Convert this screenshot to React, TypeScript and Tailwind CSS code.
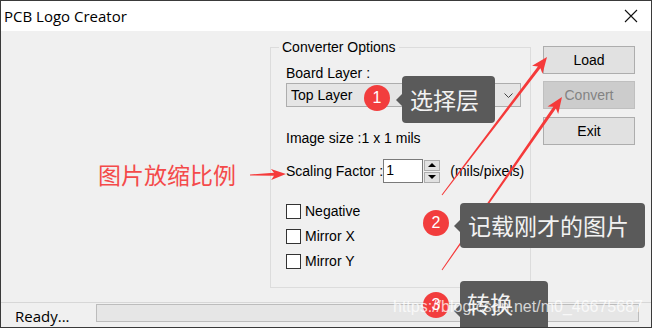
import type { ReactNode } from "react";

const ui = "font-['Liberation_Sans',Arial,sans-serif]";
const cjk = "font-['Noto_Sans_CJK_SC','Noto_Sans',sans-serif]";

function arrowPoints(
  x1: number,
  y1: number,
  x2: number,
  y2: number,
  head = 16,
  headW = 13,
  tail = 1,
  shaft = 3.2
) {
  const len = Math.hypot(x2 - x1, y2 - y1);
  const ux = (x2 - x1) / len;
  const uy = (y2 - y1) / len;
  const nx = -uy;
  const ny = ux;
  const bx = x2 - ux * head;
  const by = y2 - uy * head;
  const jx = bx + ux * 3;
  const jy = by + uy * 3;
  const pts = [
    [x1 + (nx * tail) / 2, y1 + (ny * tail) / 2],
    [jx + (nx * shaft) / 2, jy + (ny * shaft) / 2],
    [bx + (nx * headW) / 2, by + (ny * headW) / 2],
    [x2, y2],
    [bx - (nx * headW) / 2, by - (ny * headW) / 2],
    [jx - (nx * shaft) / 2, jy - (ny * shaft) / 2],
    [x1 - (nx * tail) / 2, y1 - (ny * tail) / 2],
  ];
  return pts.map((p) => p.map((v) => v.toFixed(1)).join(",")).join(" ");
}

function Callout({ className, children }: { className: string; children: ReactNode }) {
  return (
    <div className={`absolute rounded-[4px] bg-[#5a5a5a] text-[#f2f2f2] ${cjk} ${className}`}>
      <span className="absolute left-[-6px] top-1/2 -mt-[6px] h-0 w-0 border-y-[6px] border-r-[6px] border-y-transparent border-r-[#5a5a5a]" />
      {children}
    </div>
  );
}

function Badge({ n, className }: { n: number; className: string }) {
  return (
    <div
      className={`absolute flex h-[26px] w-[26px] items-center justify-center rounded-full bg-[#f23d3d] text-[16px] text-white ${ui} ${className}`}
    >
      {n}
    </div>
  );
}

function Check({ label }: { label: string }) {
  return (
    <div className="flex h-[16px] items-center">
      <span className="h-[15px] w-[15px] border border-[#333] bg-white" />
      <span className="ml-[4px] text-[14px] text-black">{label}</span>
    </div>
  );
}

export default function App() {
  return (
    <div className={`relative flex h-[328px] w-[652px] flex-col overflow-hidden border border-[#3a3a3a] bg-[#f0f0f0] ${ui}`}>
      <div className="flex h-[30px] shrink-0 items-center justify-between bg-white pl-[3px] pr-[13px]">
        <span className="font-['Open_Sans',sans-serif] text-[15px] text-black">PCB Logo Creator</span>
        <svg width="14" height="14" viewBox="0 0 14 14">
          <path d="M1 1L13 13M13 1L1 13" stroke="#111" strokeWidth="1.1" />
        </svg>
      </div>

      <div className="flex flex-1 pl-[269px]">
        <fieldset className="mt-[8px] h-[249px] w-[261px] border border-[#dcdcdc] pl-[15px]">
          <legend className="ml-[-7px] px-[3px] text-[14px] leading-[16px] text-black">Converter Options</legend>
          <div className="mt-[10px] text-[14px] leading-[16px] text-black">Board Layer :</div>
          <div className="mt-[2px] flex h-[24px] w-[235px] items-center justify-between border border-[#adadad] bg-[#e5e5e5] pl-[4px] pr-[7px]">
            <span className="text-[14px] text-black">Top Layer</span>
            <svg width="9" height="5" viewBox="0 0 9 5">
              <polyline points="0.5,0.5 4.5,4.5 8.5,0.5" fill="none" stroke="#444" strokeWidth="1" />
            </svg>
          </div>
          <div className="mt-[23px] text-[14px] leading-[16px] text-black">Image size :1 x 1 mils</div>
          <div className="mt-[13px] flex h-[24px] items-center">
            <span className="text-[14px] text-black">Scaling Factor :</span>
            <div className="h-[24px] w-[40px] border border-[#7a7a7a] bg-white pl-[2px] text-[14px] leading-[20px] text-black">
              1
            </div>
            <div className="ml-[1px] flex flex-col gap-[1px]">
              <div className="flex h-[11px] w-[16px] items-center justify-center border border-[#adadad] bg-[#e1e1e1]">
                <span className="h-0 w-0 border-x-[4px] border-b-[4px] border-x-transparent border-b-black" />
              </div>
              <div className="flex h-[11px] w-[16px] items-center justify-center border border-[#adadad] bg-[#e1e1e1]">
                <span className="h-0 w-0 border-x-[4px] border-t-[4px] border-x-transparent border-t-black" />
              </div>
            </div>
            <span className="ml-[10px] text-[14px] text-black">(mils/pixels)</span>
          </div>
          <div className="mt-[20px] flex flex-col gap-[9px]">
            <Check label="Negative" />
            <Check label="Mirror X" />
            <Check label="Mirror Y" />
          </div>
        </fieldset>

        <div className="ml-[12px] mt-[15px] flex flex-col gap-[7px]">
          <button className="h-[28px] w-[92px] border border-[#adadad] bg-[#e1e1e1] text-[14px] text-black">Load</button>
          <button className="h-[28px] w-[92px] border border-[#bfbfbf] bg-[#cccccc] text-[14px] text-[#838383]">Convert</button>
          <button className="mt-[1px] h-[28px] w-[92px] border border-[#adadad] bg-[#e1e1e1] text-[14px] text-black">Exit</button>
        </div>
      </div>

      <div className="flex h-[25px] shrink-0 items-start border-t border-[#d7d7d7]">
        <span className="ml-[14px] mt-[4px] font-['Open_Sans',sans-serif] text-[15px] leading-[18px] text-black">Ready...</span>
        <div className="ml-[26px] mt-[1px] h-[18px] w-[543px] border border-[#bcbcbc] bg-[#e6e6e6]" />
      </div>

      {/* annotations */}
      <div className={`absolute left-[97px] top-[157px] text-[23px] leading-[32px] text-[#f44a4a] ${cjk}`}>图片放缩比例</div>
      <svg className="pointer-events-none absolute left-[-1px] top-[-1px]" width="652" height="328">
        <polygon points={arrowPoints(250, 175, 286, 174, 15, 11, 1, 3)} fill="#f53a3a" />
        <polygon points={arrowPoints(442, 195, 547, 57)} fill="#f53a3a" />
        <polygon points={arrowPoints(442, 270, 562, 97)} fill="#f53a3a" />
      </svg>

      <Badge n={1} className="left-[363px] top-[84px]" />
      <Callout className="left-[401px] top-[75px] h-[47px] w-[93px] pl-[8px] text-[23px] leading-[47px]">选择层</Callout>

      <Badge n={2} className="left-[422px] top-[209px]" />
      <Callout className="left-[459px] top-[202px] h-[45px] w-[185px] pl-[8px] text-[23px] leading-[45px]">记载刚才的图片</Callout>

      <Badge n={3} className="left-[422px] top-[291px]" />
      <Callout className="left-[459px] top-[280px] h-[60px] w-[88px] pl-[7px] pt-[5px] text-[23px] leading-[34px]">转换</Callout>

      <div className="absolute left-[392px] top-[297px] text-[16px] leading-[18px] text-white/75">https://blog.csdn.net/m0_46675687</div>
    </div>
  );
}
